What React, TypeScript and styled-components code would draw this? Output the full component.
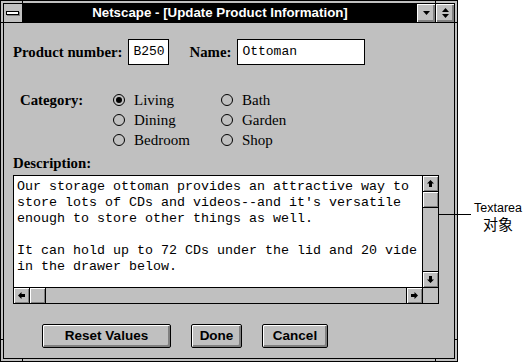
import React from "react";
import styled, { createGlobalStyle } from "styled-components";

const GRAY = "#c0c0c0";
const SHADOW = "#808080";

const GlobalStyle = createGlobalStyle`
  html, body { margin: 0; padding: 0; background: #fff; }
  body { font-family: "Liberation Serif", serif; }
`;

// whole picture: window plus the callout on white
const Page = styled.div`
  position: relative;
  width: 524px;
  height: 362px;
  background: #fff;
`;

// outer resize frame of the window
const Window = styled.div`
  position: relative;
  width: 458px;
  height: 362px;
  box-sizing: border-box;
  border: 1px solid #000;
  padding: 2px;
  background: ${GRAY};
`;

// little corner marks across the resize frame
const FrameMark = styled.div<{ $x: number; $y: number; $vertical?: boolean }>`
  position: absolute;
  left: ${(p) => p.$x}px;
  top: ${(p) => p.$y}px;
  width: ${(p) => (p.$vertical ? 1 : 2)}px;
  height: ${(p) => (p.$vertical ? 2 : 1)}px;
  background: #000;
`;

const WindowInner = styled.div`
  height: 100%;
  box-sizing: border-box;
  border: 1px solid #000;
  display: flex;
  flex-direction: column;
`;

const TitleBar = styled.div`
  display: flex;
  height: 18px;
  border-bottom: 1px solid #000;
`;

const SysMenu = styled.div`
  width: 18px;
  border-right: 1px solid #000;
  background: ${GRAY};
  display: flex;
  align-items: center;
  justify-content: center;
`;

const SysBar = styled.div`
  width: 11px;
  height: 2px;
  background: #fff;
  border: 1px solid #000;
  box-shadow: 1px 1px 0 ${SHADOW};
  margin: 0 1px 1px 0;
`;

const Caption = styled.div`
  flex: 1;
  background: #000;
  color: #fff;
  font-family: "Liberation Sans", Arial, sans-serif;
  font-weight: bold;
  font-size: 13.3px;
  line-height: 18px;
  text-align: center;
  white-space: nowrap;
`;

const CaptionButton = styled.div<{ $divider?: boolean }>`
  width: 18px;
  background: ${GRAY};
  border-left: ${(p) => (p.$divider ? "1px solid #000" : "none")};
  box-shadow: inset 1px 1px 0 #fff, inset -2px -2px 0 ${SHADOW};
  display: flex;
  align-items: center;
  justify-content: center;
`;

const TriStack = styled.div`
  display: flex;
  flex-direction: column;
  gap: 2px;
`;

// everything below the title bar
const Content = styled.div`
  flex: 1;
  display: flex;
  flex-direction: column;
  padding: 16px 0 0 9px;
`;

const Row = styled.div`
  display: flex;
  align-items: center;
  gap: 6px;
`;

const FieldLabel = styled.span<{ $indent?: number }>`
  font-family: "Liberation Serif", "Times New Roman", serif;
  font-weight: bold;
  font-size: 14.8px;
  line-height: 16px;
  color: #000;
  margin-left: ${(p) => p.$indent ?? 0}px;
`;

const TextField = styled.div<{ $width: number }>`
  width: ${(p) => p.$width}px;
  height: 26px;
  box-sizing: border-box;
  border: 1px solid #000;
  background: #fff;
  padding-left: 4px;
  font-family: "Liberation Mono", "Courier New", monospace;
  font-size: 13px;
  line-height: 24px;
  color: #000;
`;

const CategoryRow = styled.div`
  display: flex;
  margin-top: 25px;
`;

const CategoryLabel = styled(FieldLabel)`
  width: 93px;
  line-height: 20px;
`;

const RadioGrid = styled.div`
  display: grid;
  grid-template-columns: 108px auto;
  grid-auto-rows: 20px;
`;

const RadioItem = styled.label`
  display: flex;
  align-items: center;
  gap: 9px;
  font-family: "Liberation Serif", "Times New Roman", serif;
  font-size: 15px;
  color: #000;
`;

const RadioCircle = styled.span<{ $checked?: boolean }>`
  width: 10px;
  height: 10px;
  border: 1px solid #000;
  border-radius: 50%;
  display: flex;
  align-items: center;
  justify-content: center;
  &::after {
    content: "";
    display: ${(p) => (p.$checked ? "block" : "none")};
    width: 6px;
    height: 6px;
    border-radius: 50%;
    background: #000;
  }
`;

const DescLabel = styled(FieldLabel)`
  margin-top: 5px;
  display: block;
`;

// textarea with its two scrollbars
const TextBox = styled.div`
  margin-top: 4px;
  width: 426px;
  height: 129px;
  box-sizing: border-box;
  border: 1px solid #000;
  display: grid;
  grid-template-columns: 1fr 16px;
  grid-template-rows: 1fr 16px;
`;

const TextCell = styled.div`
  background: #fff;
  padding: 3px 3px 0 3px;
  overflow: hidden;
`;

const TextBody = styled.div`
  white-space: pre;
  font-family: "Liberation Mono", "Courier New", monospace;
  font-size: 13.33px;
  line-height: 16px;
  color: #000;
`;

const VScroll = styled.div`
  border-left: 1px solid #000;
  display: flex;
  flex-direction: column;
  background: ${GRAY};
`;

const HScroll = styled.div`
  border-top: 1px solid #000;
  display: flex;
  background: ${GRAY};
`;

const Corner = styled.div`
  border-left: 1px solid #000;
  border-top: 1px solid #000;
  background: ${GRAY};
`;

const ScrollPart = styled.div<{ $edge: "top" | "bottom" | "left" | "right" }>`
  width: 15px;
  height: 15px;
  flex: none;
  background: ${GRAY};
  ${(p) => `border-${p.$edge}: 1px solid #000;`}
  box-shadow: inset 1px 1px 0 #fff, inset -1px -1px 0 ${SHADOW};
  display: flex;
  align-items: center;
  justify-content: center;
`;

const Track = styled.div`
  flex: 1;
`;

const ButtonRow = styled.div`
  display: flex;
  gap: 20px;
  margin: 20px 0 0 29px;
`;

const PushButton = styled.button<{ $width: number }>`
  width: ${(p) => p.$width}px;
  height: 24px;
  box-sizing: border-box;
  border: 1px solid #000;
  border-radius: 2px;
  background: ${GRAY};
  box-shadow: inset 1px 1px 0 #fff, inset -2px -2px 0 ${SHADOW};
  font-family: "Liberation Sans", Arial, sans-serif;
  font-weight: bold;
  font-size: 13.5px;
  color: #000;
  padding: 0 0 1px 0;
`;

// "Textarea 对象" note outside the window
const CalloutLine = styled.div`
  position: absolute;
  left: 438px;
  top: 214px;
  width: 33px;
  height: 1px;
  background: #000;
`;

const CalloutText = styled.div`
  position: absolute;
  left: 474px;
  top: 200px;
  display: flex;
  flex-direction: column;
  align-items: center;
  font-family: "Liberation Sans", Arial, "Noto Sans CJK SC", sans-serif;
  color: #000;
`;

const CalloutLatin = styled.span`
  font-size: 12.5px;
  line-height: 16px;
`;

const CalloutCjk = styled.span`
  font-family: "Noto Sans CJK SC", sans-serif;
  font-size: 15px;
  line-height: 16px;
`;

type Dir = "up" | "down" | "left" | "right";

const Arrow: React.FC<{ dir: Dir }> = ({ dir }) => {
  const rot = { up: 0, right: 90, down: 180, left: 270 }[dir];
  return (
    <svg width="7" height="7" viewBox="0 0 7 7" style={{ transform: `rotate(${rot}deg)` }}>
      <path d="M3.5 0 L7 3.5 L5 3.5 L5 7 L2 7 L2 3.5 L0 3.5 Z" fill="#000" />
    </svg>
  );
};

const Tri: React.FC<{ down?: boolean }> = ({ down }) => (
  <svg width="7" height="4" viewBox="0 0 7 4">
    <path d={down ? "M0 0 L7 0 L3.5 4 Z" : "M0 4 L7 4 L3.5 0 Z"} fill="#000" />
  </svg>
);

const radios = [
  ["Living", true],
  ["Bath", false],
  ["Dining", false],
  ["Garden", false],
  ["Bedroom", false],
  ["Shop", false],
] as const;

// the control shows only what fits before the scrollbar
const description = `Our storage ottoman provides an attractive way to
store lots of CDs and videos--and it's versatile
enough to store other things as well.

It can hold up to 72 CDs under the lid and 20 vide
in the drawer below.`;

const App: React.FC = () => (
  <Page>
    <GlobalStyle />
    <Window>
      <FrameMark $x={0} $y={21} />
      <FrameMark $x={0} $y={338} />
      <FrameMark $x={454} $y={21} />
      <FrameMark $x={454} $y={338} />
      <FrameMark $x={21} $y={0} $vertical />
      <FrameMark $x={434} $y={0} $vertical />
      <FrameMark $x={21} $y={358} $vertical />
      <FrameMark $x={434} $y={358} $vertical />
      <WindowInner>
        <TitleBar>
          <SysMenu>
            <SysBar />
          </SysMenu>
          <Caption>Netscape - [Update Product Information]</Caption>
          <CaptionButton>
            <Tri down />
          </CaptionButton>
          <CaptionButton $divider>
            <TriStack>
              <Tri />
              <Tri down />
            </TriStack>
          </CaptionButton>
        </TitleBar>

        <Content>
          <Row>
            <FieldLabel>Product number:</FieldLabel>
            <TextField $width={41}>B250</TextField>
            <FieldLabel $indent={14}>Name:</FieldLabel>
            <TextField $width={128}>Ottoman</TextField>
          </Row>

          <CategoryRow>
            <CategoryLabel $indent={7}>Category:</CategoryLabel>
            <RadioGrid>
              {radios.map(([name, checked]) => (
                <RadioItem key={name}>
                  <RadioCircle $checked={checked} />
                  {name}
                </RadioItem>
              ))}
            </RadioGrid>
          </CategoryRow>

          <DescLabel>Description:</DescLabel>
          <TextBox>
            <TextCell>
              <TextBody>{description}</TextBody>
            </TextCell>
            <VScroll>
              <ScrollPart $edge="bottom">
                <Arrow dir="up" />
              </ScrollPart>
              <ScrollPart $edge="bottom" />
              <Track />
              <ScrollPart $edge="top">
                <Arrow dir="down" />
              </ScrollPart>
            </VScroll>
            <HScroll>
              <ScrollPart $edge="right">
                <Arrow dir="left" />
              </ScrollPart>
              <ScrollPart $edge="right" />
              <Track />
              <ScrollPart $edge="left">
                <Arrow dir="right" />
              </ScrollPart>
            </HScroll>
            <Corner />
          </TextBox>

          <ButtonRow>
            <PushButton $width={129}>Reset Values</PushButton>
            <PushButton $width={51}>Done</PushButton>
            <PushButton $width={66}>Cancel</PushButton>
          </ButtonRow>
        </Content>
      </WindowInner>
    </Window>
    <CalloutLine />
    <CalloutText>
      <CalloutLatin>Textarea</CalloutLatin>
      <CalloutCjk>对象</CalloutCjk>
    </CalloutText>
  </Page>
);

export default App;
